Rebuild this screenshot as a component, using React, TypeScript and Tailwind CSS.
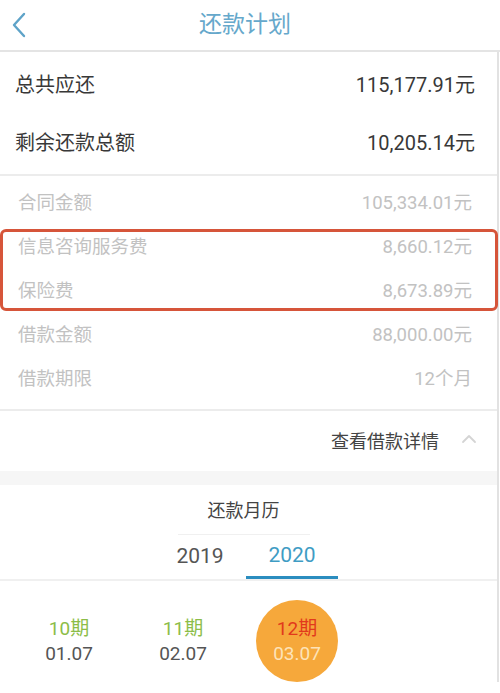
import React from 'react';

const FONT = "font-['Roboto','Noto_Sans_CJK_SC',sans-serif]";

interface RowProps {
  label: string;
  value: string;
}

const MainRow: React.FC<RowProps> = ({ label, value }) => (
  <div className="flex justify-between items-center h-[58px] pl-[15px] pr-[22px] text-[20px] text-[#383838]">
    <span>{label}</span>
    <span>{value}</span>
  </div>
);

const SubRow: React.FC<RowProps> = ({ label, value }) => (
  <div className="flex justify-between items-center h-[44px] pl-[18px] pr-[25px] text-[18.5px] text-[#c2c2c2]">
    <span>{label}</span>
    <span>{value}</span>
  </div>
);

const periods = [
  { no: '10期', date: '01.07', active: false },
  { no: '11期', date: '02.07', active: false },
  { no: '12期', date: '03.07', active: true },
];

export default function App() {
  return (
    <div className={`${FONT} w-[500px] h-[693px] overflow-hidden bg-white`}>
      {/* header */}
      <div className="relative flex items-center justify-center h-[52px] border-b-2 border-[#e4e4e4]">
        <svg className="absolute left-[11px] top-[12px]" width="16" height="26" viewBox="0 0 16 26" fill="none">
          <path d="M13 2 L3 13 L13 24" stroke="#5ea3c8" strokeWidth="2.4" strokeLinecap="round" strokeLinejoin="round" />
        </svg>
        <span className="text-[23px] text-[#66a8cb] ml-[-10px]">还款计划</span>
      </div>

      <div className="border-r-2 border-[#e2e2e2] w-[499px]">
        <div className="pt-[4px] pb-[2px] border-b-2 border-[#ececec]">
          <MainRow label="总共应还" value="115,177.91元" />
          <MainRow label="剩余还款总额" value="10,205.14元" />
        </div>

        <div className="pt-[6px] pb-[7px] border-b-2 border-[#ececec]">
          <SubRow label="合同金额" value="105,334.01元" />
          <div className="border-[3px] border-[#d6553a] rounded-[6px] my-[3px] -mr-[1px]">
            <div className="-my-[6px] -ml-[3px] -mr-[2px]">
              <SubRow label="信息咨询服务费" value="8,660.12元" />
              <SubRow label="保险费" value="8,673.89元" />
            </div>
          </div>
          <SubRow label="借款金额" value="88,000.00元" />
          <SubRow label="借款期限" value="12个月" />
        </div>

        <div className="flex items-center justify-end h-[60px] pr-[20px] text-[18px] text-[#444]">
          <span>查看借款详情</span>
          <svg className="ml-[22px] mt-[-4px]" width="16" height="10" viewBox="0 0 16 10" fill="none">
            <path d="M2 8 L8 2 L14 8" stroke="#d4d4d4" strokeWidth="1.8" strokeLinecap="round" strokeLinejoin="round" />
          </svg>
        </div>

        <div className="h-[14px] bg-[#f6f6f6]" />

        <div className="flex flex-col items-center">
          <div className="pt-[12px] pb-[10px] px-[30px] ml-[-10px] border-b border-[#f0f0f0] text-[18px] text-[#444]">还款月历</div>
        </div>

        <div className="flex justify-center border-b-2 border-[#f0f0f0]">
          <div className="flex ml-[-5px]">
            <div className="w-[92px] h-[44px] flex items-center justify-center text-[21px] text-[#555]">2019</div>
            <div className="w-[92px] h-[44px] flex items-center justify-center text-[21px] text-[#3f9cc4] border-b-[3px] border-[#2b8dbf] mb-[-2px]">2020</div>
          </div>
        </div>

        <div className="flex pl-[28px] pt-[19px] gap-[32px]">
          {periods.map((p) => (
            <div
              key={p.no}
              className={`w-[82px] h-[82px] rounded-full flex flex-col items-center justify-center leading-[25px] text-[19px] ${p.active ? 'bg-[#f6a83b]' : ''}`}
            >
              <span className={p.active ? 'text-[#e2391c]' : 'text-[#8cbd48]'}>{p.no}</span>
              <span className={p.active ? 'text-[#fde3b8]' : 'text-[#555]'}>{p.date}</span>
            </div>
          ))}
        </div>
      </div>
    </div>
  );
}
